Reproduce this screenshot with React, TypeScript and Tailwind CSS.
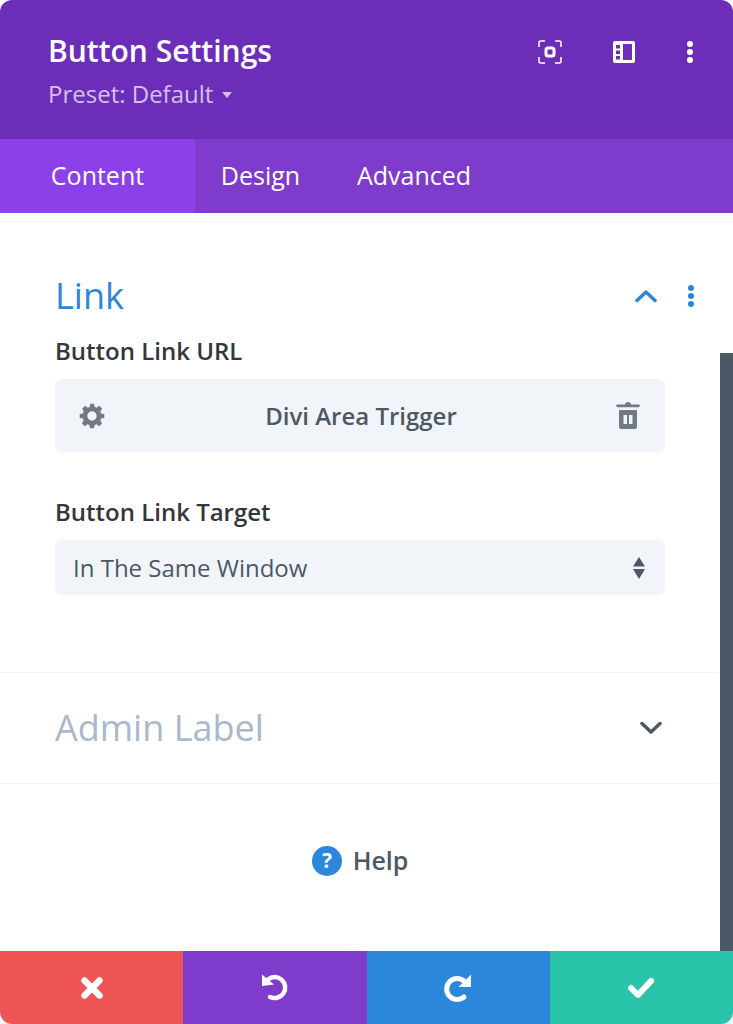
export default function App() {
  return (
    <div className="relative flex h-[1024px] w-[733px] flex-col overflow-hidden rounded-[12px] bg-white font-['Open_Sans',sans-serif] text-[#32373c]">
      {/* Header */}
      <div className="flex h-[139px] shrink-0 justify-between bg-[#6c2eb9] pl-[48px] pr-[39px]">
        <div>
          <h1 className="mt-[30px] text-[30px] leading-[42px] font-semibold text-white">Button Settings</h1>
          <div className="mt-[6px] flex items-center gap-[9px] text-[24px] leading-[32px] text-[#d5c0ed]">
            Preset: Default
            <svg width="10" height="6" viewBox="0 0 10 6" className="mt-[2px]">
              <path d="M0 0h10L5 6z" fill="#d5c0ed" />
            </svg>
          </div>
        </div>
        <div className="mt-[40px] flex h-[24px] items-start gap-[50px]">
          <svg width="24" height="24" viewBox="0 0 24 24" fill="none" stroke="#fff">
            <path d="M1 7V2.5A1.5 1.5 0 0 1 2.500 1H7M17 1h4.500A1.500 1.500 0 0 1 23 2.500V7M23 17v4.500a1.500 1.500 0 0 1-1.500 1.500H17M7 23H2.500A1.500 1.500 0 0 1 1 21.500V17" strokeWidth="1.500" />
            <rect x="8" y="8" width="8" height="8" rx="2" strokeWidth="3" />
          </svg>
          <svg width="24" height="24" viewBox="0 0 24 24">
            <path fillRule="evenodd" fill="#fff" d="M3 1h18a2 2 0 0 1 2 2v18a2 2 0 0 1-2 2H3a2 2 0 0 1-2-2V3a2 2 0 0 1 2-2zM4 5v3.500h4V5zm0 5.500v3.500h4v-3.500zM4 16v3.500h4V16zM11 4v16h9V4z" />
          </svg>
          <svg width="8" height="24" viewBox="0 0 8 24" fill="#fff">
            <circle cx="4" cy="4" r="3" />
            <circle cx="4" cy="12" r="3" />
            <circle cx="4" cy="20" r="3" />
          </svg>
        </div>
      </div>

      {/* Tabs */}
      <div className="flex h-[74px] shrink-0 bg-[#7e3bcc] text-[25px] font-medium text-white">
        <div className="flex w-[195px] items-center justify-center bg-[#8c40ea]">Content</div>
        <div className="flex w-[131px] items-center justify-center">Design</div>
        <div className="flex items-center pl-[31px]">Advanced</div>
      </div>

      {/* Body */}
      <div className="mt-[8px] flex-1 border-t border-[#f1f4f9]">
        <div className="flex h-[451px] flex-col border-b border-[#f1f4f9] pl-[55px] pr-[68px]">
          <div className="mt-[50px] flex items-center justify-between">
            <h2 className="text-[36px] leading-[48px] text-[#2b87da]">Link</h2>
            <div className="mr-[-30px] flex items-center gap-[30px]">
              <svg width="22" height="14" viewBox="0 0 22 14" fill="none" stroke="#2b87da" strokeWidth="3.500" strokeLinecap="round" strokeLinejoin="round">
                <path d="M2 11.500l9-8.500 9 8.500" />
              </svg>
              <svg width="8" height="24" viewBox="0 0 8 24" fill="#2b87da">
                <circle cx="4" cy="4" r="3" />
                <circle cx="4" cy="12" r="3" />
                <circle cx="4" cy="20" r="3" />
              </svg>
            </div>
          </div>

          <label className="mt-[14px] text-[24px] leading-[34px] font-semibold">Button Link URL</label>
          <div className="mt-[11px] flex h-[73px] items-center justify-between rounded-[6px] bg-[#f1f5f9] pl-[23px] pr-[25px]">
            <svg width="28" height="28" viewBox="0 0 24 24" fill="#6f7a85">
              <path fillRule="evenodd" d="M13.700 1.500l.5 2.700c.6.2 1.200.4 1.700.7l2.300-1.600 2.500 2.500-1.600 2.300c.3.500.5 1.100.7 1.700l2.700.5v3.400l-2.700.5c-.2.600-.4 1.200-.7 1.700l1.600 2.300-2.500 2.500-2.300-1.600c-.5.3-1.100.5-1.700.7l-.5 2.700h-3.400l-.5-2.700c-.6-.2-1.200-.4-1.700-.7l-2.300 1.600-2.500-2.500 1.600-2.300c-.3-.5-.5-1.100-.7-1.700l-2.700-.5v-3.400l2.700-.5c.2-.6.4-1.200.7-1.700L3.600 5.800l2.500-2.500 2.300 1.600c.5-.3 1.100-.5 1.700-.7l.5-2.700zM12 8a4 4 0 1 0 0 8 4 4 0 0 0 0-8z" />
            </svg>
            <span className="text-[24px] font-semibold text-[#4c5866]">Divi Area Trigger</span>
            <svg width="24" height="28" viewBox="0 0 24 28" fill="#6f7a85">
              <path d="M9 2.500C9 1 10.200 0 12 0s3 1 3 2.500h7.500a1.300 1.300 0 0 1 0 2.700h-21a1.300 1.300 0 0 1 0-2.700z" />
              <path fillRule="evenodd" d="M4 8h16a1 1 0 0 1 1 1v16a2 2 0 0 1-2 2H5a2 2 0 0 1-2-2V9a1 1 0 0 1 1-1zm3.500 5v9h3.500v-9zm5.500 0v9h3.500v-9z" />
            </svg>
          </div>

          <label className="mt-[43px] text-[24px] leading-[34px] font-semibold">Button Link Target</label>
          <div className="mt-[11px] flex h-[55px] items-center justify-between rounded-[6px] bg-[#f1f5f9] pl-[18px] pr-[20px]">
            <span className="text-[24px] text-[#4c5866]">In The Same Window</span>
            <svg width="12" height="22" viewBox="0 0 12 22" fill="#4c5866">
              <path d="M6 0l6 9.500H0zM0 12h12l-6 10z" />
            </svg>
          </div>
        </div>

        <div className="flex h-[111px] items-center justify-between border-b border-[#f1f4f9] pl-[55px] pr-[71px]">
          <h2 className="text-[36px] text-[#a9b8cb]">Admin Label</h2>
          <svg width="22" height="14" viewBox="0 0 22 14" fill="none" stroke="#4c5866" strokeWidth="3.500" strokeLinecap="round" strokeLinejoin="round">
            <path d="M2 2.500l9 8.500 9-8.500" />
          </svg>
        </div>

        <div className="mr-[13px] mt-[58px] flex items-center justify-center gap-[11px]">
          <svg width="30" height="30" viewBox="0 0 30 30">
            <circle cx="15" cy="15" r="15" fill="#2b87da" />
            <text x="15" y="22" textAnchor="middle" fontSize="21" fontWeight="700" fill="#fff" fontFamily="Open Sans, sans-serif">?</text>
          </svg>
          <span className="text-[25px] font-semibold text-[#4c5866]">Help</span>
        </div>
      </div>

      {/* Scrollbar */}
      <div className="absolute right-0 top-[353px] h-[598px] w-[13px] bg-[#4c5866]" />

      {/* Footer actions */}
      <div className="grid h-[73px] shrink-0 grid-cols-4">
        <div className="flex items-center justify-center bg-[#ef5555]">
          <svg width="24" height="24" viewBox="0 0 24 24" fill="none" stroke="#fff" strokeWidth="6.500" strokeLinecap="round">
            <path d="M4.500 4.500l15 15M19.500 4.500l-15 15" />
          </svg>
        </div>
        <div className="flex items-center justify-center bg-[#7e3bcc]">
          <svg width="30" height="30" viewBox="0 0 30 30" fill="none">
            <path d="M8 6.500a10.500 10.500 0 1 1 2 17.500" stroke="#fff" strokeWidth="4.500" strokeLinecap="round" />
            <path d="M2 1.500L14 11.500 2 13z" fill="#fff" />
          </svg>
        </div>
        <div className="flex items-center justify-center bg-[#2b87da]">
          <svg width="30" height="30" viewBox="0 0 30 30" fill="none">
            <path d="M22 9A10.500 10.500 0 1 0 21 24" stroke="#fff" strokeWidth="5" strokeLinecap="round" />
            <path d="M28 1.500V14H15.500z" fill="#fff" />
          </svg>
        </div>
        <div className="flex items-center justify-center bg-[#29c4a9]">
          <svg width="28" height="22" viewBox="0 0 28 22" fill="none" stroke="#fff" strokeWidth="6" strokeLinecap="round" strokeLinejoin="round">
            <path d="M4 11l7 7L24 4" />
          </svg>
        </div>
      </div>
    </div>
  );
}
